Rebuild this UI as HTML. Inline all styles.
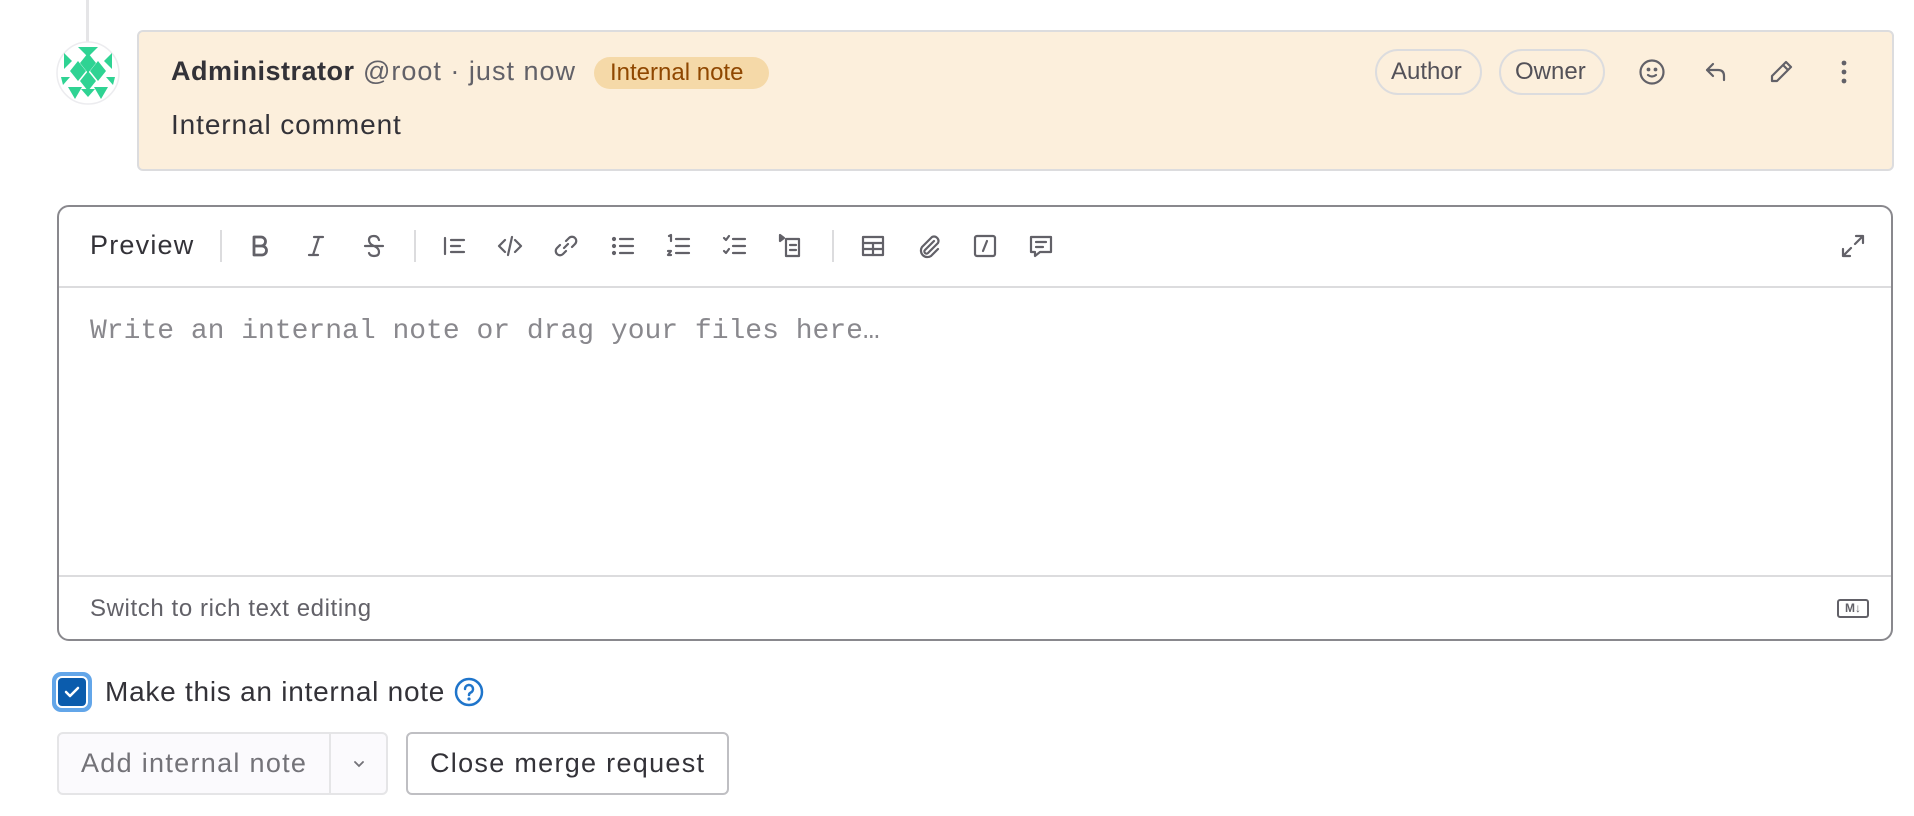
<!DOCTYPE html>
<html><head><meta charset="utf-8"><style>
*{box-sizing:border-box;margin:0;padding:0}
body{width:1914px;height:816px;background:#fff;font-family:"Liberation Sans",sans-serif;color:#333238;position:relative;overflow:hidden}
.a{position:absolute}
.ic{position:absolute;width:28px;height:28px;stroke:#626168;fill:none;stroke-width:2.2;stroke-linecap:round;stroke-linejoin:round}
.t{position:absolute;white-space:nowrap;line-height:1}
</style></head><body>
<div class="a" style="left:86px;top:0;width:3px;height:42px;background:#e5e5e7"></div>
<svg class="a" style="left:56px;top:41px" width="64" height="64" viewBox="0 0 64 64">
<circle cx="32" cy="32" r="31" fill="#fff" stroke="#ececef" stroke-width="1.5"/>
<g fill="#2fd393">
<polygon points="22,6 42,6 32,16"/><polygon points="8,12 16,20 8,28"/><polygon points="56,12 48,20 56,28"/>
<polygon points="22,20 30,30 22,40 14,30"/><polygon points="42,20 50,30 42,40 34,30"/><polygon points="32,12 40,22 32,32 24,22"/>
<polygon points="32,30 40,40 32,50 24,40"/><polygon points="5,36 14,36 7,44"/><polygon points="59,36 50,36 57,44"/>
<polygon points="12,46 26,46 19,58"/><polygon points="38,46 52,46 45,58"/><polygon points="25,48 39,48 32,56"/>
</g></svg>
<div class="a" style="left:137px;top:30px;width:1757px;height:141px;background:#fcefdc;border:2px solid #dcdcde;border-radius:6px"></div>
<div class="t" style="left:171px;top:58px;font-size:27px;font-weight:bold;color:#333238;letter-spacing:0.5px">Administrator</div>
<div class="t" style="left:363px;top:58px;font-size:27px;color:#626168;letter-spacing:1px">@root · just now</div>
<div class="a" style="left:594px;top:57px;width:175px;height:32px;border-radius:16px;background:#f5d9a8"></div>
<div class="t" style="left:610px;top:61px;font-size:24px;color:#8f4700">Internal note</div>
<div class="t" style="left:171px;top:111px;font-size:28px;color:#333238;letter-spacing:0.9px">Internal comment</div>
<div class="a" style="left:1375px;top:49px;width:107px;height:46px;border:2px solid #dcdcde;border-radius:23px"></div>
<div class="t" style="left:1391px;top:60px;font-size:24px;color:#535158">Author</div>
<div class="a" style="left:1499px;top:49px;width:106px;height:46px;border:2px solid #dcdcde;border-radius:23px"></div>
<div class="t" style="left:1515px;top:60px;font-size:24px;color:#535158">Owner</div>
<svg class="ic" style="left:1638px;top:58px" viewBox="0 0 28 28"><circle cx="14" cy="14" r="11.5"/><circle cx="10.5" cy="11.5" r=".8" fill="#626168"/><circle cx="17.5" cy="11.5" r=".8" fill="#626168"/><path d="M10 17q4 3 8 0"/></svg>
<svg class="ic" style="left:1702px;top:58px" viewBox="0 0 28 28"><path d="M11 6 5 12l6 6M5 12h11q6 0 6 6v4"/></svg>
<svg class="ic" style="left:1767px;top:58px" viewBox="0 0 28 28"><path d="M5 23v-5L19 4l5 5-14 14zM16 7l5 5"/></svg>
<svg class="ic" style="left:1830px;top:58px" viewBox="0 0 28 28"><circle cx="14" cy="5" r="2.4" fill="#626168" stroke="none"/><circle cx="14" cy="14" r="2.4" fill="#626168" stroke="none"/><circle cx="14" cy="23" r="2.4" fill="#626168" stroke="none"/></svg>

<div class="a" style="left:57px;top:205px;width:1836px;height:436px;border:2px solid #89888d;border-radius:12px"></div>
<div class="a" style="left:59px;top:286px;width:1832px;height:2px;background:#dcdcde"></div>
<div class="a" style="left:59px;top:575px;width:1832px;height:2px;background:#dcdcde"></div>
<div class="t" style="left:90px;top:232px;font-size:27px;color:#333238;letter-spacing:1.2px">Preview</div>
<div class="a" style="left:220px;top:230px;width:2px;height:32px;background:#dcdcde"></div>
<div class="a" style="left:414px;top:230px;width:2px;height:32px;background:#dcdcde"></div>
<div class="a" style="left:832px;top:230px;width:2px;height:32px;background:#dcdcde"></div>
<svg class="ic" style="left:246px;top:232px" viewBox="0 0 28 28"><path d="M8 5h7a4.5 4.5 0 0 1 0 9H8zM8 14h8a4.5 4.5 0 0 1 0 9H8z" stroke-width="2.8"/></svg>
<svg class="ic" style="left:302px;top:232px" viewBox="0 0 28 28"><path d="M12 5h9M7 23h9M17 5l-6 18"/></svg>
<svg class="ic" style="left:360px;top:232px" viewBox="0 0 28 28"><path d="M5 14h18M19 8q-1-4-5-4-5 0-5 4t5 6q5 2 5 6t-5 4q-4 0-5-3"/></svg>
<svg class="ic" style="left:440px;top:232px" viewBox="0 0 28 28"><path d="M5 6v16M11 8h13M11 14h9M11 20h13"/></svg>
<svg class="ic" style="left:496px;top:232px" viewBox="0 0 28 28"><path d="M9 8l-6 6 6 6M19 8l6 6-6 6M16 5l-4 18"/></svg>
<svg class="ic" style="left:552px;top:232px" viewBox="0 0 28 28"><path d="M12 16l4-4M14 9l3-3a4 4 0 0 1 6 6l-3 3M14 19l-3 3a4 4 0 0 1-6-6l3-3"/></svg>
<svg class="ic" style="left:609px;top:232px" viewBox="0 0 28 28"><path d="M11 7h13M11 14h13M11 21h13"/><circle cx="5" cy="7" r="1" fill="#626168"/><circle cx="5" cy="14" r="1" fill="#626168"/><circle cx="5" cy="21" r="1" fill="#626168"/></svg>
<svg class="ic" style="left:665px;top:232px" viewBox="0 0 28 28"><path d="M11 7h13M11 14h13M11 21h13M4 4l2-1v6M3 19h3l-3 4h3"/></svg>
<svg class="ic" style="left:721px;top:232px" viewBox="0 0 28 28"><path d="M12 7h12M12 14h12M12 21h12M3 6l2 2 3-4M3 19l2 2 3-4"/></svg>
<svg class="ic" style="left:777px;top:232px" viewBox="0 0 28 28"><path d="M9 7h13v17H9zM13 13h6M13 18h6"/><path d="M3 3l4 3-4 3z" fill="#626168"/></svg>
<svg class="ic" style="left:859px;top:232px" viewBox="0 0 28 28"><rect x="4" y="5" width="20" height="18"/><path d="M4 11h20M4 17h20M14 11v12"/></svg>
<svg class="ic" style="left:915px;top:232px" viewBox="0 0 28 28"><path d="M19 9l-9 9a2 2 0 0 0 3 3l10-10a4.5 4.5 0 0 0-6-6L7 15a6.5 6.5 0 0 0 9 9l7-7"/></svg>
<svg class="ic" style="left:971px;top:232px" viewBox="0 0 28 28"><rect x="4" y="4" width="20" height="20" rx="2"/><path d="M16 9l-4 10"/></svg>
<svg class="ic" style="left:1027px;top:232px" viewBox="0 0 28 28"><path d="M4 5h20v15H13l-5 4v-4H4zM9 10h10M9 15h7"/></svg>
<svg class="ic" style="left:1839px;top:232px" viewBox="0 0 28 28"><path d="M17 4h7v7M24 4l-8 8M11 24H4v-7M4 24l8-8"/></svg>
<div class="t" style="left:90px;top:318px;font-size:28px;font-family:'Liberation Mono',monospace;color:#89888d">Write an internal note or drag your files here…</div>
<div class="t" style="left:90px;top:597px;font-size:24px;color:#626168;letter-spacing:0.6px">Switch to rich text editing</div>
<div class="a" style="left:1837px;top:599px;width:32px;height:19px;border:2px solid #626168;border-radius:3px;font-size:12px;font-weight:bold;color:#626168;text-align:center;line-height:15px">M↓</div>

<div class="a" style="left:52px;top:672px;width:40px;height:40px;border-radius:9px;background:#63a6e9"></div>
<div class="a" style="left:56px;top:676px;width:32px;height:32px;border-radius:6px;background:#0b5cad;border:2px solid #fff"></div>
<svg class="a" style="left:60px;top:680px" width="24" height="24" viewBox="0 0 24 24"><path d="M6 12l4 4 8-8" stroke="#fff" stroke-width="2.5" fill="none" stroke-linecap="round" stroke-linejoin="round"/></svg>
<div class="t" style="left:105px;top:678px;font-size:28px;color:#333238;letter-spacing:0.75px">Make this an internal note</div>
<svg class="a" style="left:454px;top:677px" width="30" height="30" viewBox="0 0 30 30"><circle cx="15" cy="15" r="13" stroke="#1f75cb" stroke-width="2.5" fill="none"/><path d="M11 12a4 4 0 1 1 5.5 3.7c-1 .5-1.5 1.2-1.5 2.3" stroke="#1f75cb" stroke-width="2.5" fill="none" stroke-linecap="round"/><circle cx="15" cy="22" r="1.6" fill="#1f75cb"/></svg>
<div class="a" style="left:57px;top:732px;width:331px;height:63px;border:2px solid #e5e5e7;border-radius:6px;background:#fbfafd"></div>
<div class="a" style="left:329px;top:734px;width:2px;height:59px;background:#e5e5e7"></div>
<div class="t" style="left:81px;top:750px;font-size:27px;color:#737278;letter-spacing:1.3px">Add internal note</div>
<svg class="a" style="left:349px;top:754px" width="20" height="20" viewBox="0 0 20 20"><path d="M6 8l4 4 4-4" stroke="#737278" stroke-width="1.8" fill="none" stroke-linecap="round"/></svg>
<div class="a" style="left:406px;top:732px;width:323px;height:63px;border:2px solid #bfbfc3;border-radius:6px;background:#fff"></div>
<div class="t" style="left:430px;top:750px;font-size:27px;color:#333238;letter-spacing:1.3px">Close merge request</div>
</body></html>
